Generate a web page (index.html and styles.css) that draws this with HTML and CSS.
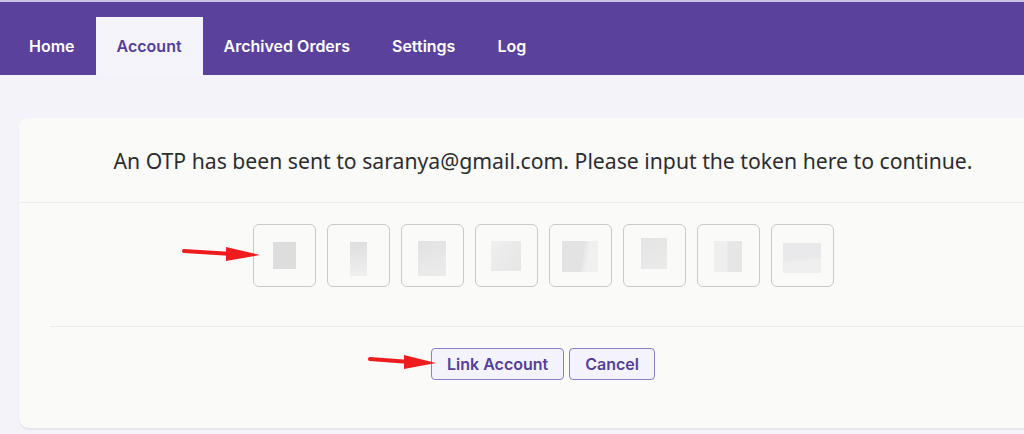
FILE: index.html
```html
<!DOCTYPE html>
<html>
<head>
<meta charset="utf-8">
<link rel="stylesheet" href="styles.css">
</head>
<body>
<nav class="nav">
  <a class="tab">Home</a>
  <a class="tab active">Account</a>
  <a class="tab">Archived Orders</a>
  <a class="tab">Settings</a>
  <a class="tab">Log</a>
</nav>
<main class="main">
  <section class="card">
    <header class="card-head">An OTP has been sent to saranya@gmail.com. Please input the token here to continue.</header>
    <div class="otp-row">
      <div class="otp"><span class="blot b1"></span></div>
      <div class="otp"><span class="blot b2"></span></div>
      <div class="otp"><span class="blot b3"></span></div>
      <div class="otp"><span class="blot b4"></span></div>
      <div class="otp"><span class="blot b5"></span></div>
      <div class="otp"><span class="blot b6"></span></div>
      <div class="otp"><span class="blot b7"></span></div>
      <div class="otp"><span class="blot b8"></span></div>
    </div>
    <div class="card-foot">
      <button class="btn">Link Account</button>
      <button class="btn">Cancel</button>
    </div>
  </section>
</main>
<svg class="arrow arrow-1" width="80" height="16" viewBox="0 0 80 16">
  <path d="M2 5 L50 8" stroke="#ee1c1c" stroke-width="4" stroke-linecap="round"/>
  <path d="M44 1 L78 9 L44 15 Z" fill="#ee1c1c"/>
</svg>
<svg class="arrow arrow-2" width="70" height="16" viewBox="0 0 70 16">
  <path d="M2 5 L42 8" stroke="#ee1c1c" stroke-width="4" stroke-linecap="round"/>
  <path d="M36 1 L68 9 L36 15 Z" fill="#ee1c1c"/>
</svg>
</body>
</html>
```
FILE: styles.css
```css
html, body {
  margin: 0;
  padding: 0;
  overflow: hidden;
  background: #f4f3f9;
  width: 1024px;
  height: 434px;
}
body {
  position: relative;
  font-family: Inter, "Noto Sans", sans-serif;
}
.nav {
  display: flex;
  align-items: flex-end;
  height: 73px;
  border-top: 2px solid #c9c1e2;
  background: #5a419b;
  padding-left: 8px;
}
.tab {
  display: flex;
  align-items: center;
  height: 58px;
  padding: 0 21px;
  color: #ffffff;
  font-size: 16px;
  font-weight: 600;
}
.tab.active {
  background: #f5f4fa;
  color: #553f98;
}
.main {
  padding: 43px 0 0 19px;
}
.card {
  width: 1048px;
  background: #fafaf9;
  border-radius: 10px;
  box-shadow: 0 2px 2px rgba(0,0,0,0.06);
}
.card-head {
  height: 84px;
  display: flex;
  align-items: center;
  justify-content: center;
  border-bottom: 1px solid #ececec;
  font-family: "Noto Sans", sans-serif;
  font-size: 21.2px;
  color: #2d2d2d;
}
.otp-row {
  display: flex;
  justify-content: center;
  gap: 11px;
  margin: 0 31px;
  padding: 21px 0 39px;
  border-bottom: 1px solid #ececec;
}
.otp {
  width: 61px;
  height: 61px;
  border: 1px solid #c9c9cc;
  border-radius: 6px;
  display: flex;
  align-items: center;
  justify-content: center;
}
.blot { display: block; }
.b1 { width: 23px; height: 27px; background: #dcdddc; margin-top: 0; }
.b2 { width: 17px; height: 34px; background: linear-gradient(180deg, #dedede, #efefef); margin-top: 6px; }
.b3 { width: 28px; height: 35px; background: linear-gradient(160deg, #e2e2e2, #ececec); margin-top: 6px; }
.b4 { width: 30px; height: 30px; background: linear-gradient(120deg, #efefef, #e6e6e6); margin-top: 0; }
.b5 { width: 36px; height: 31px; background: linear-gradient(100deg, #e3e3e3 55%, #f0f0f0 70%); margin-top: 2px; }
.b6 { width: 26px; height: 31px; background: linear-gradient(150deg, #e4e4e4, #ebebeb); margin-top: -4px; }
.b7 { width: 28px; height: 31px; background: linear-gradient(90deg, #efefef 45%, #e6e6e6 50%); margin-top: 2px; }
.b8 { width: 38px; height: 30px; background: linear-gradient(175deg, #e9e9eb 50%, #efefef 60%); margin-top: 4px; }
.card-foot {
  display: flex;
  justify-content: center;
  gap: 5px;
  padding: 21px 0 48px;
}
.btn {
  height: 32px;
  padding: 0 15px;
  border: 1px solid #8c7dc6;
  border-radius: 4px;
  background: #f4f3fb;
  color: #553f98;
  font-family: Inter, sans-serif;
  font-size: 16px;
  font-weight: 600;
}
.arrow { position: absolute; }
.arrow-1 { left: 182px; top: 246px; }
.arrow-2 { left: 368px; top: 354px; }
```
